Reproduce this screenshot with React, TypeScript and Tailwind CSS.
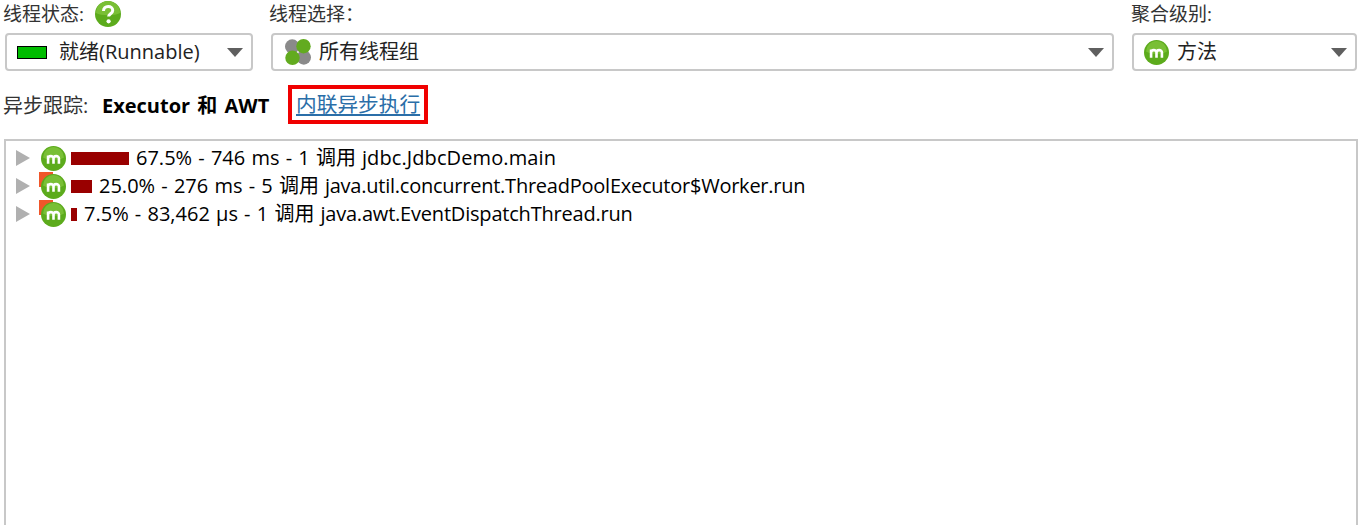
import React from 'react';

const FONT = "font-['Open_Sans','Noto_Sans_CJK_SC',sans-serif]";

function MethodIcon({ size = 25, overlay = false }: { size?: number; overlay?: boolean }) {
  return (
    <span className="relative flex shrink-0" style={{ width: size, height: size }}>
      {overlay && <span className="absolute -left-[2px] -top-[2px] h-[15px] w-[14px] bg-[#f0562a]" />}
      <svg viewBox="0 0 24 24" className="relative h-full w-full">
        <circle cx="12" cy="12" r="12" fill="#5cab1c" />
        <path d="M2 11a10 10 0 0 1 20 0c-4 3-16 3-20 0z" fill="#79bf35" />
        <path
          d="M6.800 17v-8M6.800 12c0-3 5.200-3.200 5.200 0v5M12 12c0-3 5.200-3.200 5.200 0v5"
          fill="none"
          stroke="#fff"
          strokeWidth="2.500"
        />
      </svg>
    </span>
  );
}

function Caret() {
  return (
    <svg viewBox="0 0 16 9" className="h-[9px] w-[16px] shrink-0">
      <path d="M0 0h16l-8 9z" fill="#5f5f5f" />
    </svg>
  );
}

function ThreadGroupIcon() {
  return (
    <svg viewBox="0 0 26 26" className="h-[26px] w-[26px] shrink-0">
      <circle cx="7.200" cy="7.500" r="7.200" fill="#8a8a8a" />
      <circle cx="18.800" cy="18.500" r="7.200" fill="#8a8a8a" />
      <circle cx="18.500" cy="7.200" r="7.200" fill="#62ab1f" />
      <circle cx="7.500" cy="18.800" r="7.200" fill="#62ab1f" />
    </svg>
  );
}

function HelpIcon() {
  return (
    <svg viewBox="0 0 26 26" className="h-[26px] w-[26px] shrink-0">
      <circle cx="13" cy="13" r="13" fill="#5cab1c" />
      <path d="M1 12a12 12 0 0 1 24 0c-5 3-19 3-24 0z" fill="#79bf35" />
      <path
        d="M8.500 10c0-2.800 2-4.500 4.700-4.500s4.500 1.600 4.500 3.900c0 3.300-4.100 3.300-4.100 6.200"
        fill="none"
        stroke="#fff"
        strokeWidth="3"
      />
      <circle cx="13.600" cy="20.300" r="2.100" fill="#fff" />
    </svg>
  );
}

function Combo({ className, children }: { className: string; children: React.ReactNode }) {
  return (
    <div className={`flex h-[38px] items-center rounded-[4px] border-2 border-[#c8c8c8] bg-white pr-[8px] ${className}`}>
      <div className="flex min-w-0 flex-1 items-center">{children}</div>
      <Caret />
    </div>
  );
}

const rows = [
  {
    bar: 58,
    overlay: false,
    stats: '67.5% - 746 ms - 1',
    call: 'jdbc.JdbcDemo.main',
    tracking: 'tracking-[0.1px]',
  },
  {
    bar: 21,
    overlay: true,
    stats: '25.0% - 276 ms - 5',
    call: 'java.util.concurrent.ThreadPoolExecutor$Worker.run',
    tracking: 'tracking-[-0.24px]',
  },
  {
    bar: 6,
    overlay: true,
    stats: '7.5% - 83,462 μs - 1',
    call: 'java.awt.EventDispatchThread.run',
    tracking: 'tracking-[-0.2px]',
  },
];

export default function App() {
  return (
    <div className={`flex h-[525px] w-[1359px] flex-col overflow-hidden bg-white text-[20px] leading-[28px] text-black ${FONT}`}>
      <div className="flex h-[27px] items-center pl-[3px] text-[19px] text-[#333]">
        <span className="w-[92px]">线程状态:</span>
        <HelpIcon />
        <span className="ml-[148px] w-[862px]">线程选择：</span>
        <span>聚合级别:</span>
      </div>

      <div className="mt-[6px] flex gap-[18px] pl-[5px]">
        <Combo className="w-[248px]">
          <span className="ml-[10px] h-[13px] w-[30px] border border-black bg-[#00bc00]" />
          <span className="ml-[12px] text-[#222]">就绪(Runnable)</span>
        </Combo>
        <Combo className="w-[843px]">
          <span className="ml-[12px]"><ThreadGroupIcon /></span>
          <span className="ml-[8px] text-[#222]">所有线程组</span>
        </Combo>
        <Combo className="w-[225px]">
          <span className="ml-[10px]"><MethodIcon /></span>
          <span className="ml-[8px] text-[#222]">方法</span>
        </Combo>
      </div>

      <div className="mt-[14px] flex h-[39px] items-center pl-[3px]">
        <span className="w-[99px] pt-[2px] text-[20px] text-[#333]">异步跟踪:</span>
        <span className="w-[186px] pt-[2px] text-[20px] font-bold [word-spacing:2px]">Executor 和 AWT</span>
        <a className="border-[4px] border-[#f00000] px-[4px] text-[20.700px] leading-[31px] text-[#2a6ea8] underline">内联异步执行</a>
      </div>

      <div className="-mb-[20px] ml-[4px] mt-[15px] w-[1354px] flex-1 border-2 border-[#c8c8c8] pl-[10px] pt-[3px]">
        {rows.map((row) => (
          <div key={row.call} className="flex h-[28px] items-center">
            <svg viewBox="0 0 14 16" className="h-[16px] w-[14px] shrink-0">
              <path d="M0 0l14 8-14 8z" fill="#b0b0b0" />
            </svg>
            <span className="ml-[11px]"><MethodIcon overlay={row.overlay} /></span>
            <span className="ml-[5px] h-[13px] bg-[#990000]" style={{ width: row.bar }} />
            <span className="ml-[7px] whitespace-nowrap [word-spacing:1px]">{row.stats} 调用</span>
            <span className={`ml-[6px] whitespace-nowrap ${row.tracking}`}>{row.call}</span>
          </div>
        ))}
      </div>
    </div>
  );
}
